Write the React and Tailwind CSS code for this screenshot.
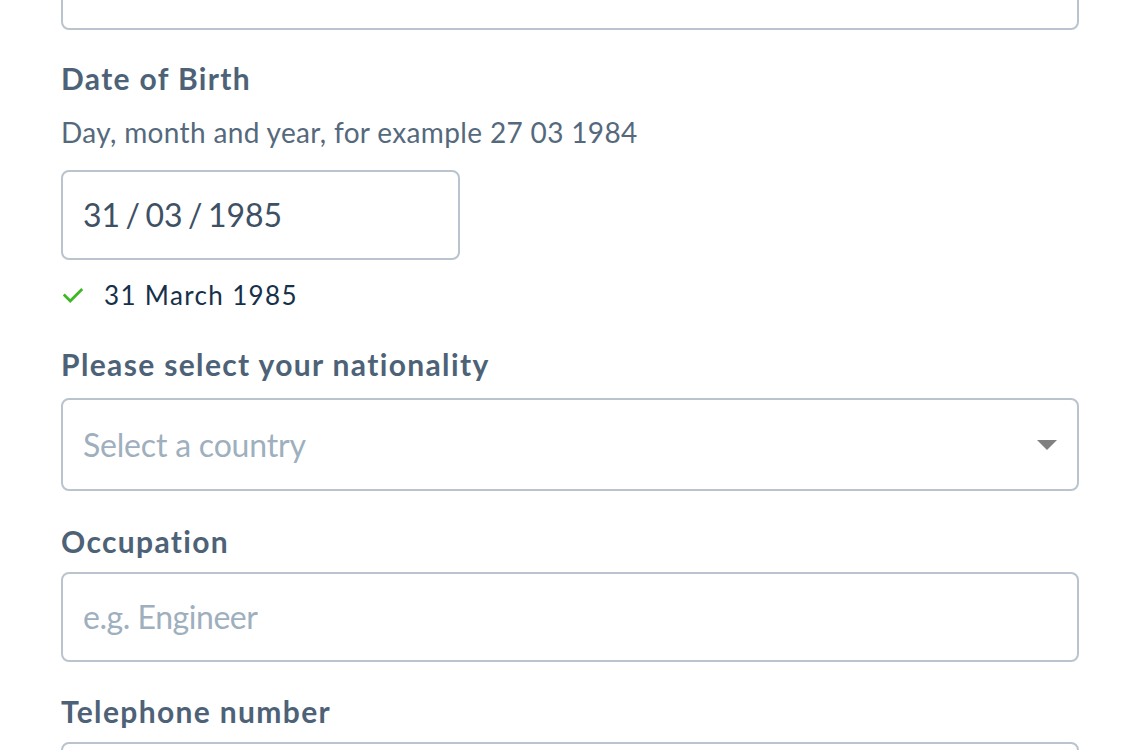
const font = { fontFamily: "Lato, 'Noto Sans', sans-serif" };

const Label = ({ children, className = "" }) => (
  <div className={`text-[30px] leading-[36px] font-bold tracking-[1.35px] text-[#4d6277] ${className}`}>{children}</div>
);

const TextBox = ({ placeholder, value, className = "", phClass = "" }) => (
  <div
    className={`h-[90px] border-2 border-[#b9c4ce] rounded-[8px] bg-white flex items-center px-[20px] text-[32px] ${className}`}
  >
    {value ? (
      <span className="text-[#3e5164] [word-spacing:-2.75px]">{value}</span>
    ) : (
      <span className={`text-[#9eafbe] ${phClass}`}>{placeholder}</span>
    )}
  </div>
);

export default function App() {
  return (
    <div className="w-[1140px] h-[750px] overflow-hidden bg-white" style={font}>
      <div className="px-[61px] -mt-[60px]">
        <div className="h-[90px] border-2 border-[#b9c4ce] rounded-[8px]" />

        <Label className="mt-[30px]">Date of Birth</Label>
        <div className="mt-[19px] text-[28px] leading-[34px] tracking-[0.35px] text-[#55697d]">
          Day, month and year, for example 27 03 1984
        </div>
        <TextBox value="31 / 03 / 1985" className="mt-[21px] w-[399px] h-[89px]" />
        <div className="mt-[19px] flex items-center gap-[20px] text-[26px] leading-[32px] tracking-[1.35px] text-[#17304a]">
          <svg width="22" height="22" viewBox="0 0 24 24" fill="none" className="ml-[1px]">
            <path d="M3 12.5l6 6L21 6.5" stroke="#3db824" strokeWidth="3" strokeLinecap="square" />
          </svg>
          <span>31 March 1985</span>
        </div>

        <Label className="mt-[35px]">Please select your nationality</Label>
        <div className="mt-[16px] h-[93px] border-2 border-[#b9c4ce] rounded-[8px] flex items-center justify-between pl-[20px] pr-[20px] text-[32px]">
          <span className="text-[#9eafbe] tracking-[-0.2px]">Select a country</span>
          <svg width="20" height="10" viewBox="0 0 20 10">
            <path d="M0 0h20L10 10z" fill="#808080" />
          </svg>
        </div>

        <Label className="mt-[32px]">Occupation</Label>
        <TextBox placeholder="e.g. Engineer" phClass="tracking-[-0.45px]" className="mt-[13px] h-[89px]" />

        <Label className="mt-[31px]">Telephone number</Label>
        <TextBox placeholder="" className="mt-[13px]" />
      </div>
    </div>
  );
}
